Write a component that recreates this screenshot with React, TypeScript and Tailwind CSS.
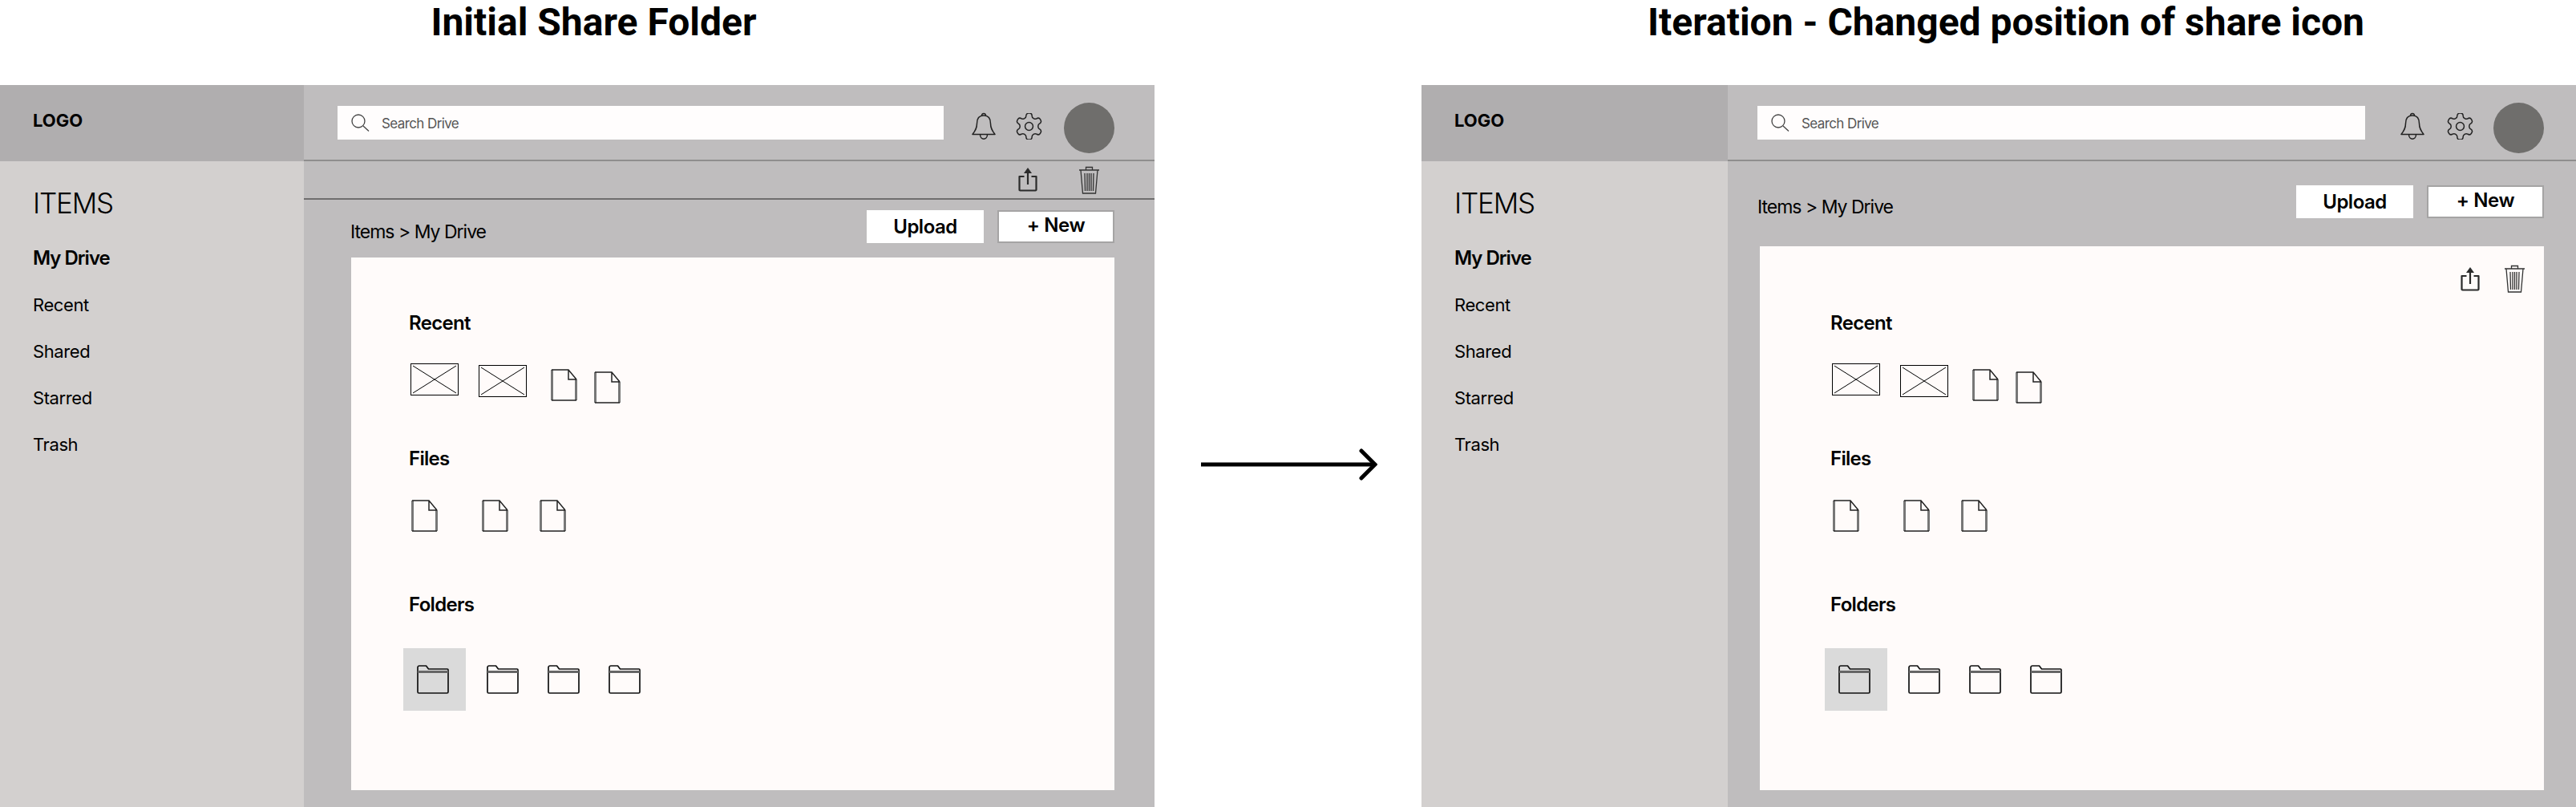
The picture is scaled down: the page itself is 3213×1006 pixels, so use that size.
import React from 'react';

const Bell = () => (
  <svg viewBox="0 0 30 34" className="w-[30px] h-[34px]" fill="none" stroke="#222" strokeWidth="1.5">
    <path d="M15 4c-6 0-8.500 4-8.500 10 0 6-2 9-5.500 13.500h28C25.500 23 23.500 20 23.500 14c0-6-2.500-10-8.500-10z" strokeLinejoin="round" />
    <path d="M12.500 4.500c0-4 5-4 5 0" />
    <path d="M10.500 27.500c0 7.500 9 7.500 9 0" />
  </svg>
);

const Gear = () => (
  <svg viewBox="2 2 20 20" className="w-[33px] h-[33px]" fill="none" stroke="#222" strokeWidth="0.9" strokeLinejoin="round">
    <path d="M12.220 2h-.44a2 2 0 0 0-2 2v.18a2 2 0 0 1-1 1.730l-.43.250a2 2 0 0 1-2 0l-.15-.080a2 2 0 0 0-2.730.730l-.22.380a2 2 0 0 0 .730 2.730l.15.100a2 2 0 0 1 1 1.720v.510a2 2 0 0 1-1 1.740l-.15.090a2 2 0 0 0-.730 2.730l.22.380a2 2 0 0 0 2.730.730l.15-.080a2 2 0 0 1 2 0l.43.250a2 2 0 0 1 1 1.730V20a2 2 0 0 0 2 2h.44a2 2 0 0 0 2-2v-.18a2 2 0 0 1 1-1.730l.43-.250a2 2 0 0 1 2 0l.15.080a2 2 0 0 0 2.730-.730l.22-.390a2 2 0 0 0-.730-2.730l-.15-.080a2 2 0 0 1-1-1.740v-.500a2 2 0 0 1 1-1.740l.15-.090a2 2 0 0 0 .730-2.730l-.22-.380a2 2 0 0 0-2.730-.730l-.15.080a2 2 0 0 1-2 0l-.43-.250a2 2 0 0 1-1-1.730V4a2 2 0 0 0-2-2z" />
    <circle cx="12" cy="12" r="3" />
  </svg>
);

const Share = () => (
  <svg viewBox="0 0 24 30" className="w-[24px] h-[30px]" fill="none" stroke="#2b2b2b" strokeWidth="2.200">
    <path d="M7.500 11H1.500v16.500a1 1 0 0 0 1 1h19a1 1 0 0 0 1-1V11h-6" strokeLinejoin="round" />
    <path d="M12 21V4" />
    <path d="M12 0l5 7H7z" fill="#2b2b2b" stroke="none" />
  </svg>
);

const Trash = () => (
  <svg viewBox="0 0 25 35" className="w-[25px] h-[35px]" fill="none" stroke="#333" strokeWidth="1.300">
    <path d="M0 5h25M8.500 5V1.500h8V5" />
    <path d="M2 5l2.500 29h16L23 5" />
    <path d="M7 9l.5 22M10 9v22M12.500 9v22M15 9v22M18 9l-.5 22" />
  </svg>
);

const Thumb = ({ className = '' }: { className?: string }) => (
  <svg viewBox="0 0 60 40" className={`w-[60px] h-[40px] ${className}`} fill="none" stroke="#000" strokeWidth="1">
    <rect x="0.500" y="0.500" width="59" height="39" />
    <path d="M3 3l54 34M57 3L3 37" />
  </svg>
);

const Doc = ({ className = '' }: { className?: string }) => (
  <svg viewBox="0 0 33 40" className={`w-[33px] h-[40px] ${className}`} fill="none" stroke="#222" strokeWidth="1.500">
    <path d="M1.500 1v38" stroke="#777" strokeWidth="3" />
    <path d="M31.500 13v26" stroke="#777" strokeWidth="3" />
    <path d="M1 1h21l10 12M1 39h31M22 1v12h10" />
  </svg>
);

const Folder = () => (
  <svg viewBox="0 0 40 36" className="w-[40px] h-[36px]" fill="none" stroke="#111" strokeWidth="1.700">
    <path d="M1 3a2 2 0 0 1 2-2h8.500l3 4H38a1 1 0 0 1 1 1v27.500a1.500 1.500 0 0 1-1.500 1.500h-35A1.500 1.500 0 0 1 1 33.500z" strokeLinejoin="round" />
    <path d="M1 8.500h38" stroke="#666" strokeWidth="3" />
  </svg>
);

const Search = () => (
  <svg viewBox="0 0 23 22" className="w-[23px] h-[22px]" fill="none" stroke="#444" strokeWidth="1.300">
    <circle cx="9" cy="9" r="8" />
    <path d="M15 15l7 6.500" />
  </svg>
);

const nav = ['Recent', 'Shared', 'Starred', 'Trash'];

const Actions = () => (
  <>
    <Share />
    <Trash />
  </>
);

const Panel = ({ moved }: { moved: boolean }) => (
  <div className="flex w-[1440px] h-[900px] shrink-0">
    <aside className={`${moved ? 'w-[382px]' : 'w-[379px]'} shrink-0 bg-[#d3d0cf] flex flex-col`}>
      <div className="h-[95px] bg-[#b0aeaf] pl-[41px] pt-[30px] text-[22px] leading-[28px] font-bold text-black">LOGO</div>
      <div className="pl-[41px] pt-[31px] text-black">
        <div className="text-[35px] leading-[42px] font-light tracking-[-1.200px]">ITEMS</div>
        <div className="mt-[19px] text-[24px] leading-[58px] font-semibold tracking-[-1px]">My Drive</div>
        {nav.map(item => (
          <div key={item} className="text-[22px] leading-[58px] font-normal tracking-[-0.4px]">{item}</div>
        ))}
      </div>
    </aside>

    <main className="flex-1 min-w-0 bg-[#bfbdbe] flex flex-col">
      <header className={`h-[95px] shrink-0 border-b-2 border-[#8f8e8e] flex items-start ${moved ? 'pl-[37px]' : 'pl-[42px]'}`}>
        <div className={`${moved ? 'w-[758px]' : 'w-[756px]'} mt-[26px] h-[42px] bg-[#fffdfd] flex items-center pl-[17px] gap-[15px]`}>
          <Search />
          <span className="text-[17px] pt-[3px] font-normal text-[#555] tracking-[-0.6px]">Search Drive</span>
        </div>
        <div className={`mt-[34px] ${moved ? 'ml-[44px]' : 'ml-[35px]'}`}><Bell /></div>
        <div className={`mt-[35px] ${moved ? 'ml-[28px]' : 'ml-[25px]'}`}><Gear /></div>
        <div className={`mt-[22px] ${moved ? 'ml-[25px]' : 'ml-[27px]'} w-[63px] h-[63px] rounded-full bg-[#6f6e6c]`} />
      </header>

      {!moved && (
        <div className="h-[48px] shrink-0 border-b-2 border-[#6f6e6e] flex items-center justify-end pr-[69px] gap-[52px]">
          <Actions />
        </div>
      )}

      <div className={`flex items-start justify-between ${moved ? 'pl-[37px] pt-[30px] pr-[40px]' : 'pl-[58px] pt-[13px] pr-[50px]'}`}>
        <span className="mt-[13px] text-[23px] leading-[28px] font-normal text-black tracking-[-1px]">Items &gt; My Drive</span>
        <div className="flex gap-[17px]">
          <button className="w-[146px] h-[41px] bg-white text-[24px] font-semibold text-black tracking-[-0.5px]">Upload</button>
          <button className="w-[146px] h-[41px] bg-white border-2 border-[#a5a4a4] text-[24px] font-semibold text-black leading-[30px] pb-[4px] tracking-[-0.4px]">+ New</button>
        </div>
      </div>

      <section className={`relative ${moved ? 'ml-[40px] mr-[40px] mt-[35px] h-[678px] pl-[88px] pt-[81px]' : 'ml-[59px] mr-[50px] mt-[18px] h-[664px] pl-[72px] pt-[67px]'} bg-[#fffbfa] text-black`}>
        {moved && (
          <div className="absolute top-[23px] right-[24px] flex items-center gap-[31px]">
            <Actions />
          </div>
        )}
        <h3 className="text-[24px] leading-[30px] font-semibold tracking-[-0.7px]">Recent</h3>
        <div className="flex items-start mt-[35px] h-[50px]">
          <Thumb className="ml-[2px]" />
          <Thumb className="ml-[25px] mt-[2px]" />
          <Doc className="ml-[30px] mt-[7px]" />
          <Doc className="ml-[21px] mt-[10px]" />
        </div>
        <h3 className="mt-[54px] text-[24px] leading-[30px] font-semibold tracking-[-0.7px]">Files</h3>
        <div className="flex items-start mt-[36px] h-[40px]">
          <Doc className="ml-[3px]" />
          <Doc className="ml-[55px]" />
          <Doc className="ml-[39px]" />
        </div>
        <h3 className="mt-[76px] text-[24px] leading-[30px] font-semibold tracking-[-0.7px]">Folders</h3>
        <div className="flex items-center mt-[39px] -ml-[7px]">
          <div className="w-[78px] h-[78px] bg-[#dadada] flex items-center pl-[17px]"><Folder /></div>
          <div className="ml-[26px]"><Folder /></div>
          <div className="ml-[36px]"><Folder /></div>
          <div className="ml-[36px]"><Folder /></div>
        </div>
      </section>
    </main>
  </div>
);

const Arrow = () => (
  <svg viewBox="0 0 220 46" className="w-[220px] h-[46px]" fill="none" stroke="#000" strokeWidth="5" strokeLinecap="round">
    <path d="M0 23h217" strokeLinecap="butt" />
    <path d="M200 6l17 17-17 17" />
  </svg>
);

export default function App() {
  return (
    <div className="w-[3213px] h-[1006px] overflow-hidden bg-white font-['Inter',sans-serif]">
      <div className="flex h-[106px] font-['Roboto',sans-serif] font-bold text-[48px] text-black text-center">
        <div className="w-[1481px] shrink-0 leading-[56px]">Initial Share Folder</div>
        <div className="w-[1732px] pl-[310px] leading-[56px]">Iteration - Changed position of share icon</div>
      </div>
      <div className="flex">
        <Panel moved={false} />
        <div className="w-[333px] shrink-0 pl-[58px] pt-[450px]">
          <Arrow />
        </div>
        <Panel moved />
      </div>
    </div>
  );
}
